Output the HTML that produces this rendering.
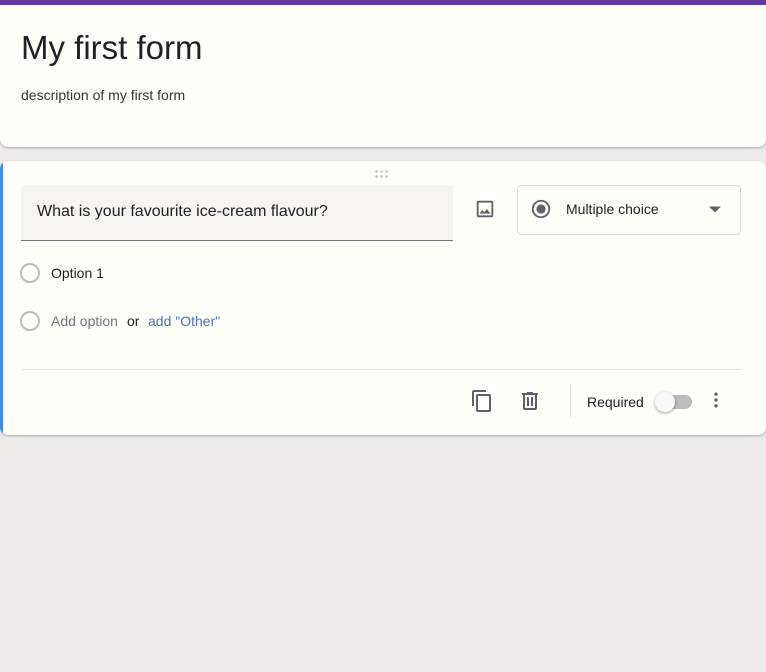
<!DOCTYPE html>
<html><head><meta charset="utf-8"><style>
*{box-sizing:border-box;margin:0;padding:0}
body{width:766px;height:672px;background:#ecebe8;font-family:"Liberation Sans",Arial,sans-serif;color:#202124;position:relative;overflow:hidden}
.card{position:absolute;background:#fffffa;border-radius:8px;box-shadow:0 1px 2px rgba(0,0,0,.3)}
.abs{position:absolute}
</style></head><body>
<div class="card" style="left:0;top:0;width:766px;height:147px;border-radius:0 0 8px 8px;overflow:hidden">
  <div class="abs" style="left:0;top:0;width:766px;height:5px;background:#5e3a9e"></div>
  <div class="abs" style="left:21px;top:29px;font-size:33px;color:#202124">My first form</div>
  <div class="abs" style="left:21px;top:87px;font-size:14px;color:#333">description of my first form</div>
</div>
<div class="card" style="left:0;top:161px;width:766px;height:274px;overflow:hidden">
  <div class="abs" style="left:0;top:0;width:3px;height:274px;background:#4285f4"></div>
  <div class="abs" style="left:374px;top:8px;width:16px;height:9px;background:radial-gradient(circle,#c8c8c8 1.2px,transparent 1.5px) 0 0/5px 5px"></div>
  <div class="abs" style="left:21px;top:24px;width:432px;height:56px;background:#f6f5ef;border-bottom:1px solid #70757a"></div>
  <div class="abs" style="left:37px;top:42px;font-size:16px;color:#202124">What is your favourite ice-cream flavour?</div>
  <svg class="abs" style="left:474px;top:37px" width="22" height="22" viewBox="0 0 24 24"><path fill="#5f6368" d="M19 3H5a2 2 0 0 0-2 2v14a2 2 0 0 0 2 2h14a2 2 0 0 0 2-2V5a2 2 0 0 0-2-2zm0 16H5V5h14v14zm-5-7l-3 3.72L9 13l-3 4h12l-4-5z"/></svg>
  <div class="abs" style="left:517px;top:24px;width:224px;height:50px;border:1px solid #dadce0;border-radius:4px"></div>
  <svg class="abs" style="left:530px;top:37px" width="22" height="22" viewBox="0 0 24 24"><circle cx="12" cy="12" r="9" fill="none" stroke="#5f6368" stroke-width="2"/><circle cx="12" cy="12" r="5" fill="#5f6368"/></svg>
  <div class="abs" style="left:566px;top:40px;font-size:14px;color:#202124">Multiple choice</div>
  <svg class="abs" style="left:709px;top:45px" width="12" height="7" viewBox="0 0 10 5"><path d="M0 0l5 5 5-5z" fill="#5f6368"/></svg>
  <div class="abs" style="left:20px;top:102px;width:20px;height:20px;border:2px solid #bdbdbd;border-radius:50%"></div>
  <div class="abs" style="left:51px;top:104px;font-size:14px;color:#202124">Option 1</div>
  <div class="abs" style="left:20px;top:150px;width:20px;height:20px;border:2px solid #bdbdbd;border-radius:50%"></div>
  <div class="abs" style="left:51px;top:152px;font-size:14px;color:#70757a">Add option</div>
  <div class="abs" style="left:127px;top:152px;font-size:14px;color:#202124">or</div>
  <div class="abs" style="left:148px;top:152px;font-size:14px;color:#4a6fc4">add "Other"</div>
  <div class="abs" style="left:21px;top:208px;width:720px;height:1px;background:#e0e0e8"></div>
  <svg class="abs" style="left:470px;top:228px" width="24" height="24" viewBox="0 0 24 24"><path fill="#5f6368" d="M16 1H4a2 2 0 0 0-2 2v14h2V3h12V1zm3 4H8a2 2 0 0 0-2 2v14a2 2 0 0 0 2 2h11a2 2 0 0 0 2-2V7a2 2 0 0 0-2-2zm0 16H8V7h11v14z"/></svg>
  <svg class="abs" style="left:518px;top:228px" width="24" height="24" viewBox="0 0 24 24"><path fill="#5f6368" d="M15 4V3H9v1H4v2h1v13a2 2 0 0 0 2 2h10a2 2 0 0 0 2-2V6h1V4h-5zm2 15H7V6h10v13zM9 8h2v9H9zm4 0h2v9h-2z"/></svg>
  <div class="abs" style="left:570px;top:224px;width:1px;height:32px;background:#dadce0"></div>
  <div class="abs" style="left:587px;top:233px;font-size:14px;color:#202124">Required</div>
  <div class="abs" style="left:658px;top:234px;width:34px;height:14px;border-radius:7px;background:#bdbdbd"></div>
  <div class="abs" style="left:655px;top:231px;width:20px;height:20px;border-radius:50%;background:#fafafa;box-shadow:0 1px 3px rgba(0,0,0,.4)"></div>
  <svg class="abs" style="left:706px;top:229px" width="20" height="20" viewBox="0 0 24 24"><circle cx="12" cy="5" r="2" fill="#5f6368"/><circle cx="12" cy="12" r="2" fill="#5f6368"/><circle cx="12" cy="19" r="2" fill="#5f6368"/></svg>
</div>
</body></html>
